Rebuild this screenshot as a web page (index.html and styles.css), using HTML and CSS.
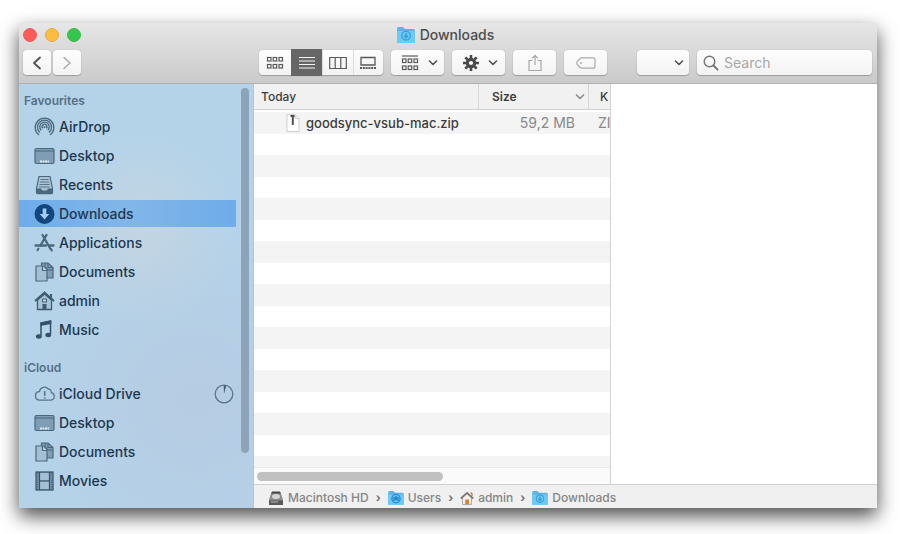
FILE: index.html
```html
<!DOCTYPE html>
<html lang="en">
<head>
<meta charset="utf-8">
<title>Downloads</title>
<link rel="stylesheet" href="styles.css">
</head>
<body>
<svg class="sprite" aria-hidden="true">
  <symbol id="chevron" viewBox="0 0 10 6"><path d="M1.500 1 5 4.500 8.500 1" fill="none" stroke="currentColor" stroke-width="1.600" stroke-linecap="round" stroke-linejoin="round"/></symbol>
  <symbol id="folder" viewBox="0 0 18 16">
    <path d="M0 2q0-2 1.500-2h4.500l2 2h8.500q1.500 0 1.500 1.500v11q0 1.500-1.500 1.500h-15Q0 16 0 14.500z" fill="#5db4e4"/>
    <path d="M0 4h18v10.500q0 1.500-1.500 1.500h-15Q0 16 0 14.500z" fill="#6dc9f5"/>
  </symbol>
  <symbol id="folder-down" viewBox="0 0 18 16">
    <use href="#folder" width="18" height="16"/>
    <circle cx="9" cy="8.700" r="4.300" fill="none" stroke="#399fd7" stroke-width="1.300"/>
    <path d="M9 6v4.500M7 8.800l2 2 2-2" fill="none" stroke="#399fd7" stroke-width="1.500"/>
  </symbol>
  <symbol id="folder-users" viewBox="0 0 18 16">
    <use href="#folder" width="18" height="16"/>
    <circle cx="9" cy="8.700" r="4.800" fill="none" stroke="#2789ca" stroke-width="1.300"/>
    <path d="M5 8h8M5.500 11q3.500-2.500 7 0" fill="none" stroke="#2789ca" stroke-width="1.500"/>
    <circle cx="9" cy="7.500" r="1.800" fill="#2789ca"/>
  </symbol>
  <symbol id="desktop" viewBox="0 0 21 20">
    <rect x="1" y="2.500" width="19" height="15" rx="1.500" fill="#7f9db4" stroke="#4b677d" stroke-width="1.200"/>
    <path d="M1 5h19" stroke="#4b677d"/>
    <path d="M6 15.500h9" stroke="#dcecf6" stroke-width="2" stroke-dasharray="2 .5"/>
  </symbol>
  <symbol id="documents" viewBox="0 0 21 20">
    <path d="M7.500 1h6.500l5 4.500V16h-11.500z" fill="#7f9db4" stroke="#4b677d" stroke-width="1.200"/>
    <path d="M14 1v4.500h5M11 1v4l3 3h5" fill="none" stroke="#4b677d" stroke-width="1.100"/>
    <path d="M2 4h6.500l4.500 4.500v10.500H2z" fill="#a3c0d4" stroke="#4b677d" stroke-width="1.200"/>
    <path d="M8.500 4v4.500H13" fill="#c1d9e8" stroke="#4b677d" stroke-width="1.200"/>
  </symbol>
</svg>

<div class="window">
  <header class="chrome">
    <div class="titlebar">
      <div class="lights">
        <button class="light close" type="button" aria-label="Close"></button>
        <button class="light minimise" type="button" aria-label="Minimise"></button>
        <button class="light zoom" type="button" aria-label="Zoom"></button>
      </div>
      <h1 class="title"><svg width="18" height="16"><use href="#folder-down"/></svg>Downloads</h1>
    </div>
    <div class="toolbar">
      <div class="history">
        <button class="tool" type="button" aria-label="Back"><svg width="10" height="14" viewBox="0 0 10 14"><path d="M8 1.500 2 7l6 5.500" fill="none" stroke="#505050" stroke-width="1.800" stroke-linecap="round" stroke-linejoin="round"/></svg></button>
        <button class="tool" type="button" aria-label="Forward"><svg width="10" height="14" viewBox="0 0 10 14"><path d="m2 1.500 6 5.500-6 5.500" fill="none" stroke="#ababab" stroke-width="1.600" stroke-linecap="round" stroke-linejoin="round"/></svg></button>
      </div>
      <div class="views">
        <button type="button" aria-label="Icon view"><svg width="18" height="14" viewBox="0 0 18 14"><g fill="none" stroke="#5a5a5a" stroke-width="1.200"><rect x="1.500" y="1.500" width="3.500" height="3.500"/><rect x="7.200" y="1.500" width="3.500" height="3.500"/><rect x="13" y="1.500" width="3.500" height="3.500"/><rect x="1.500" y="8.500" width="3.500" height="3.500"/><rect x="7.200" y="8.500" width="3.500" height="3.500"/><rect x="13" y="8.500" width="3.500" height="3.500"/></g></svg></button>
        <button type="button" class="active" aria-label="List view"><svg width="16" height="14" viewBox="0 0 16 14"><path d="M0 1.500h16M0 5h16M0 8.500h16M0 12h16" stroke="#f4f4f4" stroke-width="1.200"/></svg></button>
        <button type="button" aria-label="Column view"><svg width="18" height="14" viewBox="0 0 18 14"><path d="M.7 1.500h16.600v11H.7zM6.200 1.500v11M11.800 1.500v11" fill="none" stroke="#5a5a5a" stroke-width="1.200"/></svg></button>
        <button type="button" aria-label="Gallery view"><svg width="18" height="14" viewBox="0 0 18 14"><path d="M2 1.500h14v7.500H2z" fill="none" stroke="#5a5a5a" stroke-width="1.300"/><path d="M1 12h16" stroke="#5a5a5a" stroke-width="2" stroke-dasharray="2 .8"/></svg></button>
      </div>
      <button class="tool menu" type="button" aria-haspopup="menu" aria-label="Group items"><svg width="18" height="16" viewBox="0 0 18 16"><path d="M1 1h16" stroke="#5a5a5a" stroke-width="1.200"/><g fill="none" stroke="#5a5a5a" stroke-width="1.200"><rect x="1.500" y="4" width="3.500" height="3.500"/><rect x="7.200" y="4" width="3.500" height="3.500"/><rect x="13" y="4" width="3.500" height="3.500"/><rect x="1.500" y="11" width="3.500" height="3.500"/><rect x="7.200" y="11" width="3.500" height="3.500"/><rect x="13" y="11" width="3.500" height="3.500"/></g></svg><svg class="caret" width="10" height="6"><use href="#chevron"/></svg></button>
      <button class="tool menu" type="button" aria-haspopup="menu" aria-label="Actions"><svg width="16" height="16" viewBox="0 0 16 16"><circle cx="8" cy="8" r="3.700" fill="none" stroke="#4a4a4a" stroke-width="3.200"/><path d="M8 0v3M8 13v3M0 8h3M13 8h3M2.300 2.300l2.200 2.200M11.500 11.500l2.200 2.200M2.300 13.700l2.200-2.200M11.500 4.500l2.200-2.200" stroke="#4a4a4a" stroke-width="2.600"/></svg><svg class="caret" width="10" height="6"><use href="#chevron"/></svg></button>
      <button class="tool wide" type="button" aria-label="Share"><svg width="14" height="18" viewBox="0 0 14 18"><path d="M4.500 6.500H1v10h12v-10H9.500M7 11V1.500M4 4.300l3-3 3 3" fill="none" stroke="#a8a8a8" stroke-width="1.200"/></svg></button>
      <button class="tool wide" type="button" aria-label="Tags"><svg width="20" height="12" viewBox="0 0 20 12"><path d="M5.500.8H17q2 0 2 2v6.400q0 2-2 2H5.500Q4.300 11 1.300 7.500.3 6 1.300 4.500 4.300 1 5.500.8z" fill="none" stroke="#ababab" stroke-width="1.200"/><circle cx="5" cy="6" r="1" fill="#ababab"/></svg></button>
      <div class="picker">
        <select class="tool" aria-label="Arrangement"><option></option></select>
        <svg class="caret" width="10" height="6"><use href="#chevron"/></svg>
      </div>
      <label class="search">
        <svg width="16" height="16" viewBox="0 0 16 16"><circle cx="6.500" cy="6.500" r="5.300" fill="none" stroke="#737373" stroke-width="1.400"/><path d="m10.500 10.500 4 4" stroke="#737373" stroke-width="1.800" stroke-linecap="round"/></svg>
        <input type="search" placeholder="Search" aria-label="Search">
      </label>
    </div>
  </header>

  <div class="content">
    <aside class="sidebar">
      <nav class="places">
        <h2>Favourites</h2>
        <ul>
          <li><a href="#airdrop"><svg width="21" height="20" viewBox="0 0 21 20"><g fill="none" stroke="#4b677d" stroke-width="1.300"><path d="M5 18a9.300 9.300 0 1 1 11 0"/><path d="M6 15.500a7 7 0 1 1 9 0"/><path d="M7.200 13.200a4.700 4.700 0 1 1 6.600 0"/><path d="M8.700 11.300a2.400 2.400 0 1 1 3.600 0"/></g><circle cx="10.500" cy="10" r="1.100" fill="#4b677d"/></svg>AirDrop</a></li>
          <li><a href="#desktop-folder"><svg width="21" height="20"><use href="#desktop"/></svg>Desktop</a></li>
          <li><a href="#recents"><svg width="21" height="20" viewBox="0 0 21 20"><path d="M5 1.500h11l2.500 12v4q0 1.200-1.200 1.200H3.700Q2.500 18.700 2.500 17.500v-4z" fill="#a9c3d5" stroke="#4b677d" stroke-width="1.200"/><path d="M2.500 13.500H7l1.200 2h4.600l1.200-2h4.500v4q0 1.200-1.200 1.200H3.700Q2.500 18.700 2.500 17.500z" fill="#4b677d"/><path d="M6.500 4.500h8M6 7h9M5.500 9.500h10M5.200 12h10.500" stroke="#5a768c" stroke-width="1.200"/></svg>Recents</a></li>
          <li><a href="#downloads" class="current" aria-current="page"><svg width="21" height="20" viewBox="0 0 21 20"><circle cx="10.500" cy="10" r="10" fill="#10477f"/><path d="M8.700 4.500h3.600V10h3l-4.800 5.500L5.700 10h3z" fill="#a6cbef"/></svg>Downloads</a></li>
          <li><a href="#applications"><svg width="21" height="20" viewBox="0 0 21 20"><g fill="none" stroke="#4b677d" stroke-linecap="round"><path d="M8.500 2 16.500 16M12.500 2 6.500 12.500" stroke-width="2.300"/><path d="M1.500 12.500h10.500M16 12.500h3.500" stroke-width="2.300"/><path d="m4.500 15.500-1 1.700M17 16l.8 1.500" stroke-width="2"/></g></svg>Applications</a></li>
          <li><a href="#documents-folder"><svg width="21" height="20"><use href="#documents"/></svg>Documents</a></li>
          <li><a href="#admin"><svg width="21" height="20" viewBox="0 0 21 20"><path d="M3.500 9v9.500h14V9L10.500 3z" fill="#a6c3d7" stroke="#405b70" stroke-width="1.300"/><path d="m1 10 9.500-8.500L20 10" fill="none" stroke="#405b70" stroke-width="1.900"/><path d="M17 7V3" stroke="#405b70" stroke-width="2"/><path d="M8.500 8h4v3h-4z" fill="#c7dce9" stroke="#405b70"/><path d="M8.500 13h4v5.500h-4z" fill="#405b70"/></svg>admin</a></li>
          <li><a href="#music"><svg width="21" height="20" viewBox="0 0 21 20"><path d="M7 15.500V3l9.500-2v13" fill="none" stroke="#34506a" stroke-width="1.500"/><path d="m6.300 2.500 11-2v3.500l-11 2z" fill="#34506a"/><ellipse cx="4.800" cy="16.500" rx="2.900" ry="2.200" fill="#34506a"/><ellipse cx="14.300" cy="15" rx="2.900" ry="2.200" fill="#34506a"/></svg>Music</a></li>
        </ul>
        <h2>iCloud</h2>
        <ul>
          <li><a href="#icloud-drive"><svg width="21" height="20" viewBox="0 0 21 20"><path d="M5 16.200h11.500a3.800 3.800 0 0 0 .8-7.500 3.200 3.200 0 0 0-3-3.700A5 5 0 0 0 5.500 7.500 4.400 4.400 0 0 0 5 16.200z" fill="none" stroke="#5a768c" stroke-width="1.300"/><path d="M10.700 7v5M10.700 13.200v1.500" stroke="#5a768c" stroke-width="1.500"/></svg>iCloud Drive<svg class="progress" width="20" height="20" viewBox="0 0 20 20"><circle cx="10" cy="10" r="8.800" fill="none" stroke="#5a768c" stroke-width="1.300"/><path d="M10 10 9.700 1.500h2.500z" fill="#405b70"/></svg></a></li>
          <li><a href="#icloud-desktop"><svg width="21" height="20"><use href="#desktop"/></svg>Desktop</a></li>
          <li><a href="#icloud-documents"><svg width="21" height="20"><use href="#documents"/></svg>Documents</a></li>
          <li><a href="#movies"><svg width="21" height="20" viewBox="0 0 21 20"><rect x="2" y="1" width="17" height="18" fill="#7f9db4" stroke="#34506a" stroke-width="1.200"/><path d="M6 2h9v7H6zM6 10.500h9V18H6z" fill="#a3c0d4"/><path d="M5.500 1v18M15.500 1v18M6 10h9" stroke="#34506a" stroke-width="1.200"/><path d="M3.700 2v16M17.300 2v16" stroke="#4b677d" stroke-width="1.200" stroke-dasharray="1.200 1"/></svg>Movies</a></li>
        </ul>
      </nav>
      <div class="track"><div class="thumb"></div></div>
    </aside>

    <main class="browser">
      <div class="panes">
        <section class="list">
          <div class="rows">
            <table>
              <colgroup><col class="col-name"><col class="col-size"><col></colgroup>
              <thead><tr><th>Today</th><th class="size"><div class="sort">Size<svg width="10" height="6"><use href="#chevron"/></svg></div></th><th class="kind">K</th></tr></thead>
              <tbody>
                <tr><td><div class="file"><svg width="14" height="18" viewBox="0 0 14 18"><path d="M1 .5h8L13 4.500v13H1z" fill="#fff" stroke="#cfcfcf"/><path d="M9 .5v4h4" fill="#eee" stroke="#cfcfcf"/><path d="M4.500 2h4M6.800 1v10" stroke="#4c4c4c" stroke-width="1.900"/></svg>goodsync-vsub-mac.zip</div></td><td class="size">59,2 MB</td><td class="kind">ZI</td></tr>
                <tr><td></td><td></td><td></td></tr><tr><td></td><td></td><td></td></tr>
                <tr><td></td><td></td><td></td></tr><tr><td></td><td></td><td></td></tr>
                <tr><td></td><td></td><td></td></tr><tr><td></td><td></td><td></td></tr>
                <tr><td></td><td></td><td></td></tr><tr><td></td><td></td><td></td></tr>
                <tr><td></td><td></td><td></td></tr><tr><td></td><td></td><td></td></tr>
                <tr><td></td><td></td><td></td></tr><tr><td></td><td></td><td></td></tr>
                <tr><td></td><td></td><td></td></tr><tr><td></td><td></td><td></td></tr>
                <tr><td></td><td></td><td></td></tr><tr><td></td><td></td><td></td></tr>
              </tbody>
            </table>
          </div>
          <div class="hscroll"><div class="hthumb"></div></div>
        </section>
        <section class="preview" aria-label="Preview"></section>
      </div>
      <nav class="path" aria-label="Path">
        <a href="#macintosh-hd"><svg width="16" height="15" viewBox="0 0 16 15"><path d="M3.500 1h9L15 9v5H1V9z" fill="#8c8c8c"/><path d="M4 .5h8l.6 2H3.400z" fill="#484848"/><ellipse cx="8" cy="5.500" rx="4" ry="2.500" fill="#d5d5d5"/><path d="M1 9.500h14V14H1z" fill="#5a5a5a"/><path d="M3 11h7" stroke="#bbb"/></svg>Macintosh HD</a>
        <span class="sep">›</span>
        <a href="#users"><svg width="16" height="14"><use href="#folder-users"/></svg>Users</a>
        <span class="sep">›</span>
        <a href="#home"><svg width="14" height="14" viewBox="0 0 14 14"><path d="M2.500 6.500v7h9v-7L7 2.500z" fill="#f3f0eb" stroke="#aaa"/><path d="M.8 7.500 7 1.800l6.200 5.700" fill="none" stroke="#777" stroke-width="1.700"/><path d="M10.500 2h1.500v3" stroke="#b85a48" fill="none"/><path d="M5.200 8.500h3.800v4.500H5.200z" fill="#d9822f"/></svg>admin</a>
        <span class="sep">›</span>
        <a href="#downloads"><svg width="16" height="14"><use href="#folder-down"/></svg>Downloads</a>
      </nav>
    </main>
  </div>
</div>
</body>
</html>
```
FILE: styles.css
```css
* { box-sizing: border-box; }

body {
  display: flex;
  min-height: 100vh;
  margin: 0;
  padding: 23px 23px 26px 19px;
  background: #fff;
  color: #3c3c3c;
  font: 500 14px/20px Inter, "Liberation Sans", sans-serif;
}

button, input, select { font: inherit; }
a { color: inherit; text-decoration: none; }
svg { flex: none; display: block; }
.sprite { position: absolute; width: 0; height: 0; }

.window {
  flex: 1;
  display: flex;
  flex-direction: column;
  min-width: 0;
  box-shadow: 0 8px 18px rgba(0, 0, 0, .7);
}

/* Title bar and toolbar */
.chrome {
  padding: 2px 5px 8px 4px;
  border-bottom: 1px solid #b2b2b2;
  background: linear-gradient(#e5e6e5, #cacaca);
}

.titlebar {
  display: grid;
  grid-template-columns: 1fr auto 1fr;
  align-items: center;
  height: 20px;
  padding-right: 4px;
}

.lights { display: flex; gap: 8px; }

.light {
  width: 14px;
  height: 14px;
  padding: 0;
  border: 1px solid;
  border-radius: 50%;
}

.close { background: #fc5b57; border-color: #e8605c; }
.minimise { background: #fdbc40; border-color: #e5ab43; }
.zoom { background: #34c84a; border-color: #3cb64d; }

.title {
  display: flex;
  align-items: center;
  gap: 5px;
  margin: 0;
  color: #4d4d4d;
  font-size: 14px;
  font-weight: 500;
}

.toolbar {
  display: flex;
  gap: 8px;
  margin-top: 5px;
}

.tool, .views, .search {
  height: 25px;
  border: 0;
  border-radius: 4px;
  background: linear-gradient(#fdfdfd, #f3f3f3);
  box-shadow: 0 0 1px rgba(0, 0, 0, .3), 0 1px 1px rgba(0, 0, 0, .22);
}

.tool {
  display: flex;
  align-items: center;
  justify-content: center;
  padding: 0;
}

.history { display: flex; gap: 2px; width: 228px; }
.history .tool { width: 28px; }

.views {
  display: grid;
  grid-template-columns: 32px 31px 1fr 1fr;
  width: 124px;
}

.views button {
  display: flex;
  align-items: center;
  justify-content: center;
  padding: 0;
  border: 0;
  border-left: 1px solid #dcdcdc;
  background: none;
}

.views button:first-child { border-left: 0; }
.views .active { margin: -1px 0; border-color: #666; background: #666; }

.menu { gap: 9px; width: 53px; padding-left: 4px; }
.wide { width: 43px; }
.caret { color: #505050; }

.picker { position: relative; margin-left: 22px; }
.picker select { width: 52px; appearance: none; }
.picker .caret { position: absolute; top: 10px; right: 5px; pointer-events: none; }

.search {
  flex: 1;
  display: flex;
  align-items: center;
  gap: 5px;
  min-width: 0;
  padding: 0 6px;
}

.search input {
  flex: 1;
  min-width: 0;
  padding: 0;
  border: 0;
  outline: 0;
  background: none;
  font-weight: 400;
}

.search input::placeholder { color: #a8a8a8; opacity: 1; }

.content { flex: 1; display: flex; min-height: 0; }

/* Sidebar */
.sidebar {
  display: flex;
  width: 235px;
  border-right: 1px solid #a9c9e3;
  background:
    radial-gradient(circle at 52% 34%, rgba(200, 213, 224, .8), rgba(200, 213, 224, 0) 32%),
    radial-gradient(circle at 75% 75%, rgba(183, 202, 225, .8), rgba(183, 202, 225, 0) 50%),
    #b4d3e9;
}

.places { flex: 1; padding-top: 8px; }

.places h2 {
  margin: 0 0 3px;
  padding-left: 5px;
  color: #557084;
  font-size: 12px;
  font-weight: 600;
  line-height: 18px;
}

.places ul {
  display: grid;
  gap: 2px;
  margin: 0;
  padding: 0;
  list-style: none;
}

.places ul + h2 { margin-top: 16px; }

.places a {
  display: flex;
  align-items: center;
  gap: 4px;
  height: 27px;
  padding: 0 2px 0 15px;
  color: #1c3850;
}

.places .current {
  background: linear-gradient(90deg, #6eacea, #82b6e8 50%, #6eacea);
}

.progress { margin-left: auto; }

.track { width: 17px; padding: 4px 4px 0 5px; }
.thumb { height: 87%; border-radius: 4px; background: #8ca4b7; }

/* File list */
.browser { flex: 1; display: flex; flex-direction: column; min-width: 0; }
.panes { flex: 1; display: flex; min-height: 0; }

.list {
  flex: none;
  display: flex;
  flex-direction: column;
  width: 357px;
  border-right: 1px solid #d4d4d4;
  background: #fff;
}

.rows { flex: 1 1 0; min-height: 0; overflow: hidden; }

table {
  width: 100%;
  border-collapse: separate;
  border-spacing: 0;
  table-layout: fixed;
}

.col-name { width: 224px; }
.col-size { width: 110px; }

th {
  height: 26px;
  padding: 0 7px;
  border-bottom: 1px solid #cfcfcf;
  background: #f1f1f1;
  font-size: 12px;
  font-weight: 500;
  line-height: 18px;
  text-align: left;
}

th.size { padding: 0 3px 0 13px; border-left: 1px solid #d6d6d6; font-weight: 600; }
th.kind { padding: 0 0 0 11px; border-left: 1px solid #d6d6d6; }

.sort { display: flex; align-items: center; justify-content: space-between; }
.sort svg { color: #8c8c8c; }

tbody::before { content: ""; display: block; height: 2px; }

td { height: 21px; padding: 0; white-space: nowrap; }
tr:nth-child(odd) td { height: 22px; background: #f4f4f4; }
td.size { padding-right: 13px; color: #888; font-weight: 400; text-align: right; }
td.kind { padding-left: 10px; color: #888; font-weight: 400; }

.file {
  display: flex;
  align-items: center;
  gap: 6px;
  padding-left: 32px;
  font-size: 13px;
}

.hscroll {
  flex: none;
  height: 17px;
  padding: 4px 3px;
  border-top: 1px solid #e8e8e8;
  background: #fafafa;
}

.hthumb { width: 53%; height: 9px; border-radius: 5px; background: #c1c1c1; }

.preview { flex: 1; background: #fff; }

.path {
  display: flex;
  align-items: center;
  gap: 7px;
  height: 24px;
  padding: 3px 14px 0;
  border-top: 1px solid #cfcfcf;
  background: #f0f0f0;
  color: #858585;
  font-size: 12px;
  font-weight: 500;
}

.path a { display: flex; align-items: center; gap: 4px; }
.sep { color: #666; font-weight: 600; line-height: 18px; }
```
